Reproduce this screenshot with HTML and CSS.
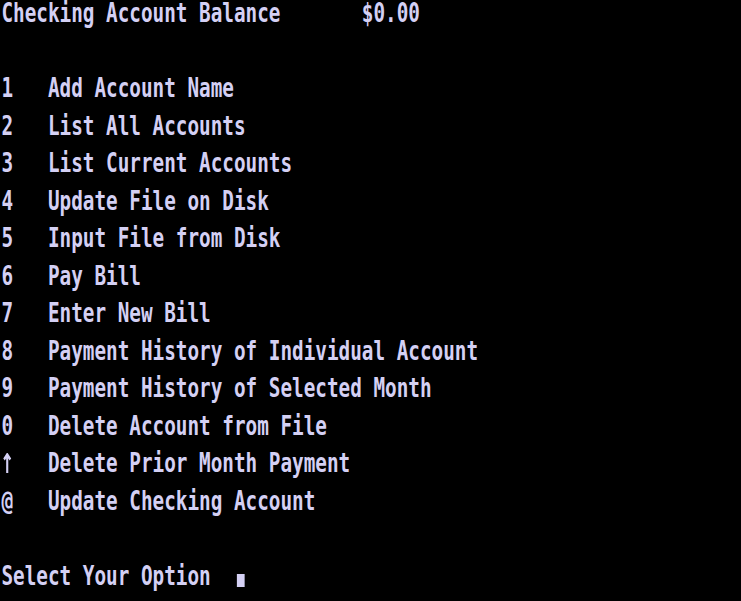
FILE: index.html
```html
<!DOCTYPE html>
<html lang="en">
<head>
<meta charset="utf-8">
<title>Checking Account</title>
<link rel="stylesheet" href="styles.css">
</head>
<body>
<main class="screen">
<div class="text">
<div class="row">Checking Account Balance       $0.00</div>
<div class="row"></div>
<div class="row">1   Add Account Name</div>
<div class="row">2   List All Accounts</div>
<div class="row">3   List Current Accounts</div>
<div class="row">4   Update File on Disk</div>
<div class="row">5   Input File from Disk</div>
<div class="row">6   Pay Bill</div>
<div class="row">7   Enter New Bill</div>
<div class="row">8   Payment History of Individual Account</div>
<div class="row">9   Payment History of Selected Month</div>
<div class="row">0   Delete Account from File</div>
<div class="row"><svg class="arrow" viewBox="0 0 16 20" width="16.5" height="20" aria-label="↑"><path d="M8 1 V20 M3.5 6.5 L8 1.5 L12.5 6.5" fill="none" stroke="currentColor" stroke-width="3"/></svg>   Delete Prior Month Payment</div>
<div class="row">@   Update Checking Account</div>
<div class="row"></div>
<div class="row">Select Your Option  <span class="cursor"></span></div>
</div>
</main>
</body>
</html>
```
FILE: styles.css
```css
html, body {
  margin: 0;
  padding: 0;
  background: #000;
  width: 741px;
  height: 601px;
  overflow: hidden;
}
.screen {
  width: 741px;
  height: 601px;
  background: #000;
  overflow: hidden;
}
.text {
  display: flex;
  flex-direction: column;
  padding-left: 2px;
  font-family: "DejaVu Sans Mono", "Liberation Mono", monospace;
  font-weight: bold;
  font-size: 27.4px;
  color: #d4d0f4;
  transform: scaleX(0.705);
  transform-origin: 0 0;
  width: 1000px;
}
.row {
  height: 37.5px;
  line-height: 25px;
  white-space: pre;
  flex: none;
}
.arrow {
  display: inline-block;
  vertical-align: -1px;
}
.cursor {
  display: inline-block;
  width: 11px;
  height: 13px;
  margin-left: 4px;
  background: #d4d0f4;
  vertical-align: -2px;
}
```
